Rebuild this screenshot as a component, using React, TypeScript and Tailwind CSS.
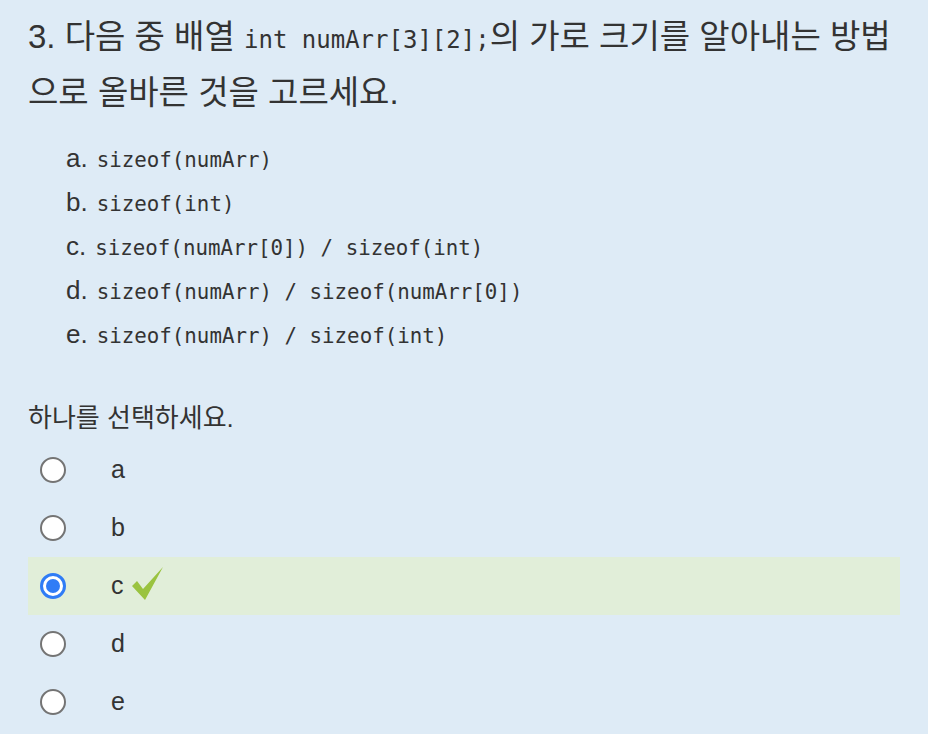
const mono = { fontFamily: '"DejaVu Sans Mono", "Liberation Mono", monospace' };

const options = [
  { key: 'a', code: 'sizeof(numArr)' },
  { key: 'b', code: 'sizeof(int)' },
  { key: 'c', code: 'sizeof(numArr[0]) / sizeof(int)' },
  { key: 'd', code: 'sizeof(numArr) / sizeof(numArr[0])' },
  { key: 'e', code: 'sizeof(numArr) / sizeof(int)' },
];

function Radio({ checked }: { checked?: boolean }) {
  if (checked) {
    return (
      <span className="flex h-[26px] w-[26px] items-center justify-center rounded-full border-[3px] border-[#2f7cf6] bg-white">
        <span className="h-[14px] w-[14px] rounded-full bg-[#2f7cf6]" />
      </span>
    );
  }
  return <span className="h-[26px] w-[26px] rounded-full border-2 border-[#747474] bg-white" />;
}

function Check() {
  return (
    <svg width="32" height="34" viewBox="0 0 32 34" className="ml-[8px] mt-[-4px]">
      <polygon points="0,19 5,14 11,22 31,0 13,33" fill="#9ac340" />
    </svg>
  );
}

export default function App() {
  return (
    <div
      className="min-h-[734px] w-full bg-[#deebf6] px-[28px] pt-[9px] text-[#333333]"
      style={{ fontFamily: '"Liberation Sans", "Noto Sans CJK KR", sans-serif' }}
    >
      <div className="text-[33px] whitespace-nowrap">
        <div className="h-[56px] leading-[56px]">
          3. 다음 중 배열 <span className="text-[24px]" style={mono}>int numArr[3][2];</span>의 가로 크기를 알아내는 방법
        </div>
        <div className="h-[56px] leading-[56px]">으로 올바른 것을 고르세요.</div>
      </div>

      <div className="mt-[15px] pl-[38px]">
        {options.map((o) => (
          <div key={o.key} className="h-[44px] text-[26px] leading-[44px] whitespace-nowrap">
            <span>{o.key}.</span>
            <span className="ml-[9px] text-[20.8px]" style={mono}>
              {o.code}
            </span>
          </div>
        ))}
      </div>

      <div className="mt-[42px] h-[40px] text-[26px] leading-[40px]">하나를 선택하세요.</div>

      <div className="mt-[3px]">
        {options.map((o) => (
          <div
            key={o.key}
            className={`flex h-[58px] items-center pl-[12px] ${o.key === 'c' ? 'bg-[#e1eed9]' : ''}`}
          >
            <Radio checked={o.key === 'c'} />
            <span className="ml-[45px] text-[25px]">{o.key}</span>
            {o.key === 'c' && <Check />}
          </div>
        ))}
      </div>
    </div>
  );
}
